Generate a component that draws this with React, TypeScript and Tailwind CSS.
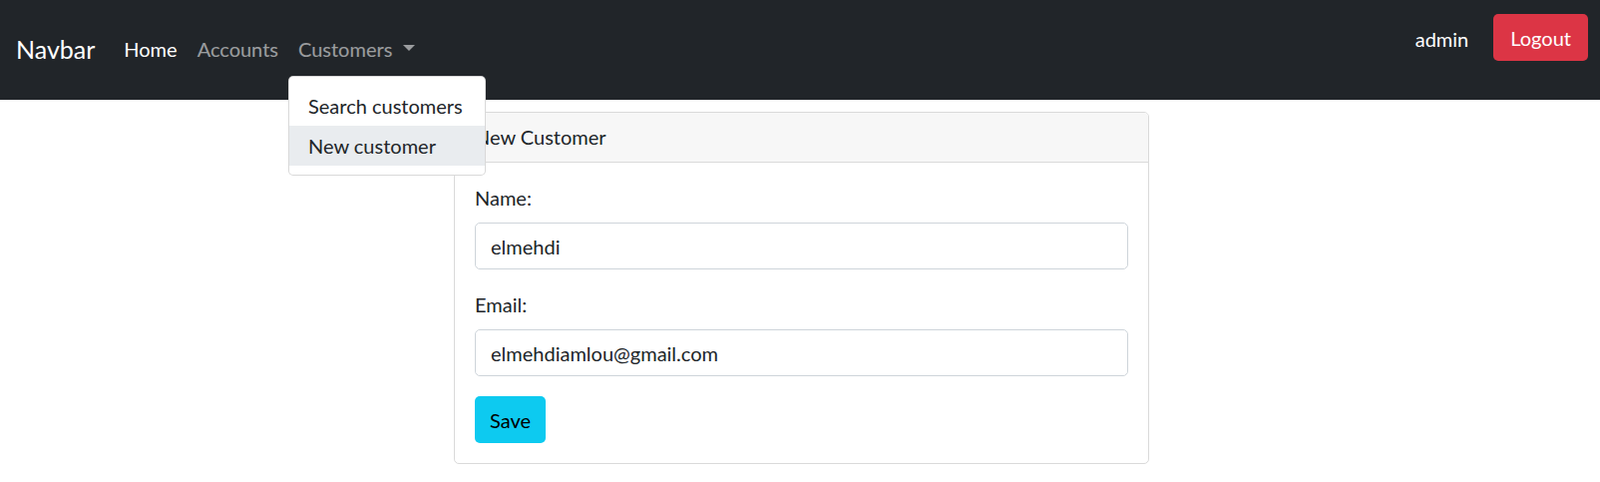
import React from 'react';

const links = [
    { label: 'Home', active: true },
    { label: 'Accounts', active: false },
];

export default function App() {
    return (
        <div className="min-h-screen bg-white text-[#212529]" style={{ fontFamily: 'Lato, "Open Sans", sans-serif' }}>
            <nav className="relative z-10 h-[100px] bg-[#212529] flex justify-between pl-[16px] pr-[12px]">
                <div className="flex items-center mt-[-2px]">
                    <a className="text-[25px] leading-[37px] text-white mr-[19px]">Navbar</a>
                    <ul className="flex items-center">
                        {links.map(({ label, active }) => (
                            <li key={label}>
                                <a className={"block px-[10px] text-[20px] leading-[30px] " + (active ? "text-white" : "text-white/55")}>
                                    {label}
                                </a>
                            </li>
                        ))}
                        <li className="relative">
                            <a className="flex items-center px-[10px] text-[20px] leading-[30px] text-white/55">
                                Customers
                                <span className="ml-[11px] mt-[-2px] w-0 h-0 border-x-[6px] border-x-transparent border-t-[6px] border-t-[#9b9d9f]" />
                            </a>
                            <div className="absolute left-0 top-[42px] w-[198px] py-[9px] bg-white border border-black/15 rounded-[5px]">
                                <a className="block px-[19px] py-[5px] text-[20px] leading-[30px] text-[#212529]">Search customers</a>
                                <a className="block px-[19px] py-[5px] text-[20px] leading-[30px] text-[#212529] bg-[#e9ecef]">New customer</a>
                            </div>
                        </li>
                    </ul>
                </div>
                <div className="self-start mt-[14px] flex items-center gap-[25px]">
                    <span className="text-[20px] leading-[30px] text-white mt-[3px]">admin</span>
                    <button className="h-[47px] px-[17px] rounded-[5px] bg-[#dc3545] text-white text-[20px] leading-[30px]">
                        Logout
                    </button>
                </div>
            </nav>

            <div className="flex justify-center pl-[3px] mt-[12px]">
                <div className="w-[697px] border border-[#dadada] rounded-[5px] overflow-hidden">
                    <div className="px-[20px] py-[10px] bg-[#f7f7f7] border-b border-[#dadada] text-[20px] leading-[29px]">
                        New Customer
                    </div>
                    <div className="p-[20px]">
                        <div className="mb-[20px]">
                            <label className="block mb-[10px] text-[20px] leading-[30px]">Name:</label>
                            <input
                                readOnly
                                value="elmehdi"
                                className="block w-full h-[47px] px-[15px] border border-[#ced4da] rounded-[5px] text-[20px] text-[#212529] outline-none"
                            />
                        </div>
                        <div className="mb-[20px]">
                            <label className="block mb-[10px] text-[20px] leading-[30px]">Email:</label>
                            <input
                                readOnly
                                value="elmehdiamlou@gmail.com"
                                className="block w-full h-[47px] px-[15px] border border-[#ced4da] rounded-[5px] text-[20px] text-[#212529] outline-none"
                            />
                        </div>
                        <button className="h-[47px] px-[15px] rounded-[5px] bg-[#0dcaf0] text-black text-[20px] leading-[30px]">
                            Save
                        </button>
                    </div>
                </div>
            </div>
        </div>
    );
}
